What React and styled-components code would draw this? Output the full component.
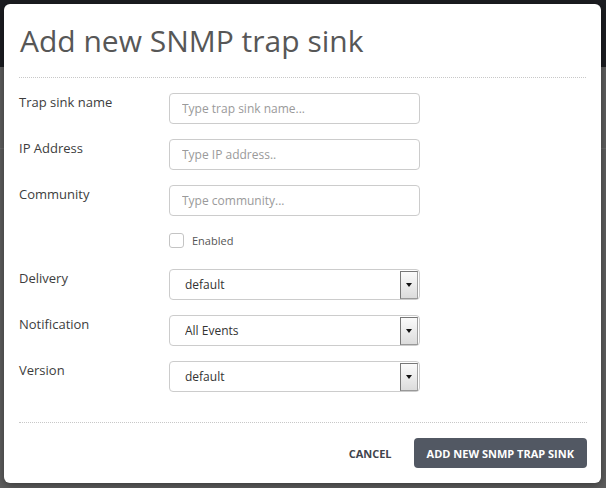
import React from "react";
import styled, { createGlobalStyle } from "styled-components";

const GlobalStyle = createGlobalStyle`
  html, body {
    margin: 0;
    padding: 0;
    height: 100%;
  }
  body {
    font-family: "Open Sans", "Liberation Sans", sans-serif;
    background:
      linear-gradient(to bottom, transparent 148px, #6a6a6a 148px, #6a6a6a 149px, transparent 149px),
      linear-gradient(to bottom, #1c1d21 0, #1c1d21 67px, #5e5e5e 67px, #5e5e5e 100%);
  }
  #root {
    height: 100%;
  }
`;

const Overlay = styled.div`
  height: 100%;
  padding: 4px 5px 5px 4px;
  box-sizing: border-box;
  display: flex;
`;

const Modal = styled.div`
  flex: 1;
  background: #ffffff;
  border-radius: 6px;
  padding: 0 15px;
  display: flex;
  flex-direction: column;
  box-shadow: 0 2px 8px rgba(0, 0, 0, 0.4);
`;

const Header = styled.div`
  padding: 17px 0 16px 1px;
  border-bottom: 1px dotted #c8c8c8;
`;

const Title = styled.h1`
  margin: 0;
  font-size: 30px;
  line-height: 40px;
  font-weight: 400;
  color: #575757;
`;

const Form = styled.div`
  padding-top: 15px;
  display: flex;
  flex-direction: column;
  gap: 15px;
`;

const Row = styled.div`
  display: flex;
  align-items: flex-start;
  margin-top: ${(p) => p.$top || 0}px;
  margin-bottom: ${(p) => p.$bottom || 0}px;
`;

const Label = styled.label`
  width: 150px;
  flex: none;
  font-size: 13px;
  line-height: 17px;
  padding-top: 1px;
  color: #3d3d3d;
`;

const Input = styled.input`
  width: 251px;
  height: 31px;
  box-sizing: border-box;
  border: 1px solid #cccccc;
  border-radius: 4px;
  padding: 0 12px;
  font-family: inherit;
  font-size: 12px;
  color: #333;
  outline: none;

  &::placeholder {
    color: #9a9a9a;
  }
`;

const CheckLabel = styled.label`
  margin-left: 150px;
  display: flex;
  align-items: center;
  gap: 8px;
  font-size: 11px;
  color: #555;
  height: 15px;
`;

const Box = styled.span`
  width: 15px;
  height: 15px;
  box-sizing: border-box;
  border: 1px solid #c4c4c4;
  border-radius: 3px;
  background: #fff;
`;

const SelectWrap = styled.div`
  width: 251px;
  height: 31px;
  box-sizing: border-box;
  border: 1px solid #cccccc;
  border-radius: 4px;
  display: flex;
  align-items: center;
  padding: 1px 1px 1px 0;
`;

const Select = styled.select`
  flex: 1;
  height: 100%;
  appearance: none;
  border: none;
  background: transparent;
  padding: 0 0 0 15px;
  font-family: inherit;
  font-size: 12px;
  color: #333;
  outline: none;
`;

const ArrowBox = styled.span`
  flex: none;
  width: 18px;
  height: 28px;
  box-sizing: border-box;
  border: 1px solid #777;
  border-right-color: #a0a0a0;
  border-bottom-color: #999;
  background: linear-gradient(to bottom, #fbfbfb, #dcdcdc);
  display: flex;
  align-items: center;
  justify-content: center;

  &::after {
    content: "";
    border-left: 3.5px solid transparent;
    border-right: 3.5px solid transparent;
    border-top: 4px solid #111;
  }
`;

const Footer = styled.div`
  margin: 30px -1px 0 0;
  border-top: 1px dotted #c8c8c8;
  padding: 15px 0;
  display: flex;
  justify-content: flex-end;
  align-items: center;
  gap: 9px;
`;

const Button = styled.button`
  height: 30px;
  padding: 0 13px;
  border: none;
  border-radius: 4px;
  font-family: inherit;
  font-size: 11px;
  font-weight: 700;
  text-transform: uppercase;
  background: ${(p) => (p.$primary ? "#525863" : "transparent")};
  color: ${(p) => (p.$primary ? "#ffffff" : "#3f444c")};
  cursor: pointer;
`;

const SelectField = ({ label, value, options }) => (
  <Row>
    <Label>{label}</Label>
    <SelectWrap>
      <Select defaultValue={value}>
        {options.map((o) => (
          <option key={o}>{o}</option>
        ))}
      </Select>
      <ArrowBox />
    </SelectWrap>
  </Row>
);

export default function App() {
  return (
    <>
      <GlobalStyle />
      <Overlay>
        <Modal>
          <Header>
            <Title>Add new SNMP trap sink</Title>
          </Header>
          <Form>
            <Row>
              <Label>Trap sink name</Label>
              <Input placeholder="Type trap sink name..." />
            </Row>
            <Row>
              <Label>IP Address</Label>
              <Input placeholder="Type IP address.." />
            </Row>
            <Row>
              <Label>Community</Label>
              <Input placeholder="Type community..." />
            </Row>
            <Row $top={2} $bottom={6}>
              <CheckLabel>
                <Box />
                Enabled
              </CheckLabel>
            </Row>
            <SelectField label="Delivery" value="default" options={["default", "inform"]} />
            <SelectField label="Notification" value="All Events" options={["All Events", "Alarms"]} />
            <SelectField label="Version" value="default" options={["default", "v1", "v2c"]} />
          </Form>
          <Footer>
            <Button>Cancel</Button>
            <Button $primary>Add new SNMP trap sink</Button>
          </Footer>
        </Modal>
      </Overlay>
    </>
  );
}
